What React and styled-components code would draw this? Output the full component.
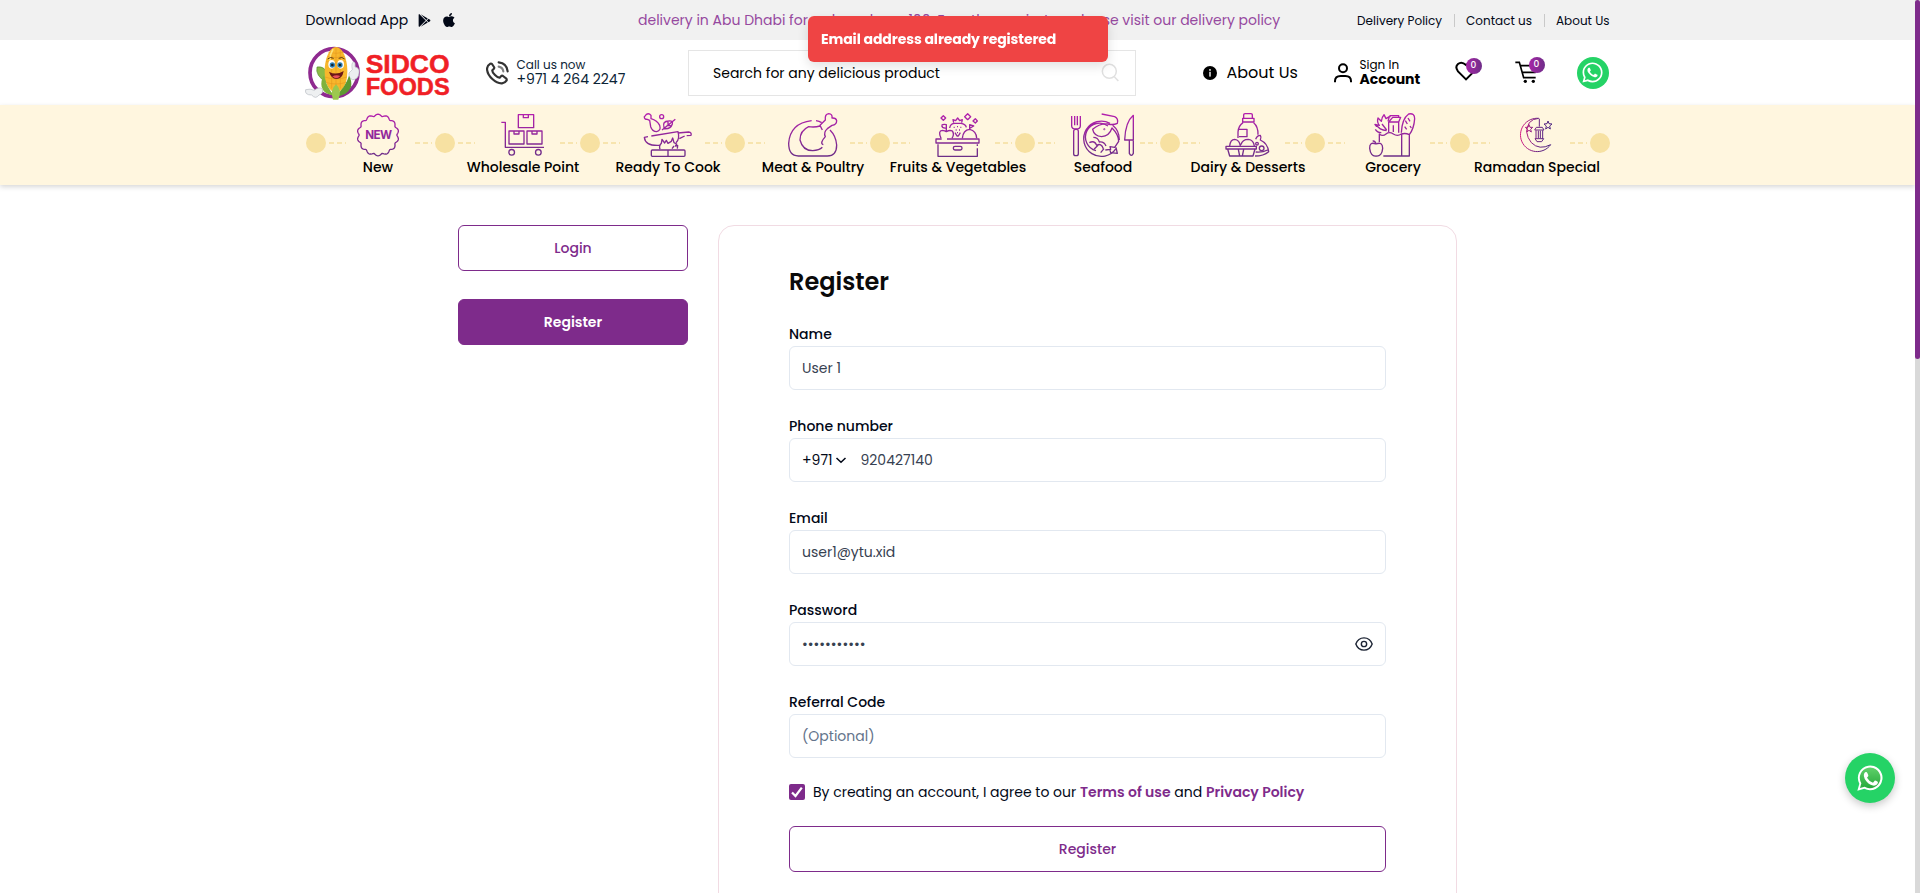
import React from "react";
import styled, { createGlobalStyle } from "styled-components";
import { FaApple, FaGooglePlay, FaWhatsapp } from "react-icons/fa";

const PURPLE = "#7e2b8b";

const GlobalStyle = createGlobalStyle`
  * { box-sizing: border-box; }
  body {
    margin: 0;
    overflow: hidden;
    background: #fff;
    color: #020817;
    font: 400 14px/20px Poppins, Inter, "Liberation Sans", sans-serif;
  }
  input, button { font: inherit; color: inherit; }
`;

/* ---------- page frame ---------- */
const Page = styled.div`
  display: grid;
  grid-template-columns: 1fr 5px;
  height: 893px;
  overflow: hidden;
`;
const Body = styled.div`
  display: flex;
  flex-direction: column;
  min-width: 0;
  overflow: hidden;
`;
const ScrollTrack = styled.div`
  background: #d9d9d9;
`;
const ScrollThumb = styled.div`
  height: 359px;
  background: ${PURPLE};
  border-radius: 3px;
`;
const Container = styled.div`
  display: flex;
  align-items: center;
  width: 1304px;
  height: 100%;
  margin-left: 305.5px;
`;

/* ---------- top bar ---------- */
const TopBar = styled.div`
  height: 40px;
  flex: none;
  background: #f1f1f1;
`;
const Download = styled.div`
  display: flex;
  align-items: center;
  width: 332.5px;
  svg { display: block; }
`;
const PlayIcon = styled(FaGooglePlay)`
  margin-left: 10px;
`;
const AppleIcon = styled(FaApple)`
  margin-left: 10px;
`;
const Ticker = styled.div`
  width: 650px;
  white-space: nowrap;
  overflow: hidden;
  color: #96499f;
`;
const TopLinks = styled.div`
  display: flex;
  margin-left: auto;
  font-size: 12px;
  line-height: 12px;
`;
const TopLink = styled.a`
  padding: 1px 0 0 11px;
  margin-left: 12px;
  border-left: 1px solid ${(p) => (p.$first ? "transparent" : "#c9c9c9")};
  white-space: nowrap;
`;

/* ---------- header ---------- */
const Header = styled.header`
  height: 65px;
  flex: none;
`;
const Logo = styled.div`
  width: 180px;
  height: 56px;
  svg { display: block; margin-left: -0.5px; }
`;
const TwoLine = styled.div`
  display: flex;
  flex-direction: column;
  margin-left: ${(p) => p.$gap}px;
  margin-top: -1px;
  width: ${(p) => p.$width}px;
  white-space: nowrap;
  line-height: 14px;
  color: ${(p) => p.$color || "#000"};
`;
const Small = styled.span`
  font-size: 12px;
`;
const Strong = styled.span`
  font-weight: ${(p) => (p.$bold ? 700 : 400)};
`;
const SearchBox = styled.div`
  display: flex;
  align-items: center;
  justify-content: space-between;
  width: 448px;
  height: 46px;
  padding: 0 16px 0 24.5px;
  border: 1px solid #e5e5e5;
  color: #000;
`;
const AboutLink = styled.a`
  display: flex;
  align-items: center;
  gap: 10px;
  width: 131px;
  margin-left: 67px;
  font-size: 16px;
  color: #000;
  white-space: nowrap;
`;
const CountIcon = styled.div`
  position: relative;
  width: ${(p) => p.$width}px;
  height: 24px;
  svg { display: block; }
`;
const Count = styled.span`
  position: absolute;
  left: ${(p) => p.$left}px;
  top: ${(p) => p.$top}px;
  width: 16px;
  height: 16px;
  border-radius: 50%;
  background: linear-gradient(90deg, #a727a6, #6f2d89);
  color: #fff;
  font-size: 9px;
  line-height: 15px;
  text-align: center;
  font-weight: 500;
`;
const Whatsapp = styled.a`
  display: flex;
  align-items: center;
  justify-content: center;
  width: 32px;
  height: 32px;
  border-radius: 50%;
  background: #25d366;
  color: #fff;
`;

/* ---------- category strip ---------- */
const Strip = styled.nav`
  height: 80px;
  flex: none;
  background: #fff6df;
  box-shadow: 0 2px 5px rgba(0, 0, 0, 0.16);
`;
const StripRow = styled.div`
  display: flex;
  width: 1304px;
  margin-left: 306px;
  padding-top: 8px;
`;
const Cell = styled.div`
  flex: none;
  width: ${(p) => p.$width}px;
`;
const TrackLine = styled.div`
  display: flex;
  align-items: center;
  height: 44px;
`;
const Dot = styled.span`
  flex: none;
  width: 20px;
  height: 20px;
  margin-top: 16px;
  border-radius: 50%;
  background: #f7e1a2;
`;
const Dashes = styled.span`
  flex: none;
  width: 17px;
  height: 2px;
  margin: 16px ${(p) => (p.$after ? 3 : 0)}px 0 ${(p) => (p.$after ? 0 : 3)}px;
  background: repeating-linear-gradient(90deg, #f7e4ae 0 5px, transparent 5px 8px);
`;
const IconBox = styled.svg`
  flex: none;
  display: block;
  width: 64px;
  height: 44px;
  margin: 0 ${(p) => p.$right}px 0 ${(p) => p.$left}px;
  overflow: visible;
`;
const CellLabel = styled.div`
  display: flex;
  justify-content: center;
  width: ${(p) => p.$width}px;
  line-height: 21px;
  font-weight: 500;
  color: #000;
  white-space: nowrap;
`;

/* ---------- account area ---------- */
const Main = styled.main`
  display: flex;
  align-items: flex-start;
  gap: 30px;
  padding: 40px 0 0 458px;
`;
const Tabs = styled.div`
  display: flex;
  flex-direction: column;
  gap: 28px;
  width: 230px;
`;
const Button = styled.button`
  width: 100%;
  height: 46px;
  padding: 0;
  border: 1px solid ${PURPLE};
  border-radius: 6px;
  background: ${(p) => (p.$solid ? PURPLE : "#fff")};
  color: ${(p) => (p.$solid ? "#fff" : PURPLE)};
  font-weight: ${(p) => p.$weight || 500};
`;
const Card = styled.form`
  width: 739px;
  height: 760px;
  padding: 40px 70px 0;
  border: 1px solid #f1dbe3;
  border-radius: 16px;
`;
const Title = styled.h1`
  margin: 0 0 24px;
  font-size: 24px;
  line-height: 32px;
  font-weight: 600;
  color: #0a0a0a;
`;
const Field = styled.div`
  height: 92px;
`;
const Label = styled.label`
  display: block;
  height: 24px;
  line-height: 24px;
  font-weight: 500;
`;
const InputBox = styled.div`
  display: flex;
  align-items: center;
  height: 44px;
  padding: 0 12px;
  border: 1px solid #e2e8f0;
  border-radius: 6px;
`;
const Input = styled.input`
  flex: 1;
  min-width: 0;
  padding: 0;
  border: 0;
  outline: 0;
  background: none;
  color: #374151;
  &::placeholder { color: #64748b; opacity: 1; }
`;
const DialCode = styled.span`
  display: flex;
  align-items: center;
  gap: 2px;
  width: 58.5px;
`;
const Terms = styled.div`
  display: flex;
  align-items: center;
  gap: 8px;
  height: 20px;
  margin: 0 0 24px;
  white-space: nowrap;
`;
const Checkbox = styled.span`
  display: flex;
  width: 16px;
  height: 16px;
  border-radius: 2px;
  background: ${PURPLE};
`;
const TermsLink = styled.a`
  color: ${PURPLE};
  font-weight: 600;
`;

/* ---------- overlays ---------- */
const Toast = styled.div`
  position: fixed;
  left: 808px;
  top: 16px;
  width: 300px;
  height: 46px;
  padding: 0 13px;
  border-radius: 6px;
  background: #ef4444;
  box-shadow: 0 4px 12px rgba(0, 0, 0, 0.12);
  color: #fff;
  font-weight: 700;
  line-height: 46px;
  letter-spacing: -0.1px;
  white-space: nowrap;
`;
const ChatButton = styled.a`
  position: fixed;
  left: 1845px;
  top: 753px;
  display: flex;
  align-items: center;
  justify-content: center;
  width: 50px;
  height: 50px;
  border-radius: 50%;
  background: #25d366;
  box-shadow: 0 3px 9px rgba(0, 0, 0, 0.22);
`;

/* ---------- drawings ---------- */
function LogoArt() {
  return (
    <svg width="150" height="56" viewBox="0 0 450 168" fontFamily="Liberation Sans, Arial, sans-serif" fontWeight="700">
      <circle cx="87" cy="83" r="72" fill="#fff" stroke="#8f2a90" strokeWidth="11" />
      <path d="M64 112Q30 92 36 66Q62 62 68 92Z" fill="#8dbb45" stroke="#4e8a2b" strokeWidth="2" />
      <path d="M142 74q-4-20 4-24q6 2 4 16q14 2 12 18q-2 20-20 20q-12-6-10-20Z" fill="#eceef0" stroke="#b9bec4" strokeWidth="2" />
      <path d="M20 150q-22 0-18-16q14-4 26 2q14-12 24-4q4 14-10 18q-10 14-22 0Z" fill="#eef0f1" stroke="#b5babf" strokeWidth="2" />
      <path d="M93 6C112 6 127 40 127 78C127 120 112 140 93 142C74 140 59 120 59 78C59 40 74 6 93 6Z" fill="#f8b72c" />
      <path d="M80 14V130M93 6V138M106 14V130M68 34Q93 42 118 34M63 50Q93 58 123 50M60 96Q93 108 126 96M70 22Q93 28 116 22M62 112Q93 122 124 112" stroke="#e2921c" strokeWidth="2" fill="none" opacity=".75" />
      <path d="M84 12Q76 26 74 46" stroke="#fde27a" strokeWidth="5" fill="none" />
      <path d="M56 92Q66 128 88 152Q58 150 50 126Q46 108 56 92Z" fill="#7fb23c" />
      <path d="M132 92Q122 126 90 154Q126 154 138 126Q142 108 132 92Z" fill="#5d9a31" />
      <path d="M93 118Q74 134 84 164H100Q112 134 93 118Z" fill="#9cc84e" />
      <ellipse cx="80" cy="58" rx="10" ry="13" fill="#fff" />
      <ellipse cx="107" cy="58" rx="10" ry="13" fill="#fff" />
      <circle cx="82" cy="60" r="8" fill="#2c7fb5" />
      <circle cx="105" cy="60" r="8" fill="#2c7fb5" />
      <circle cx="82" cy="60" r="4" fill="#10202c" />
      <circle cx="105" cy="60" r="4" fill="#10202c" />
      <path d="M68 42q8-8 18-2M101 40q10-6 18 2" stroke="#5c3a12" strokeWidth="3" fill="none" />
      <path d="M72 80Q93 92 116 78Q112 102 94 102Q78 100 72 80Z" fill="#6b1717" />
      <path d="M82 94Q94 88 106 93Q94 106 82 94Z" fill="#e8505b" />
      <g fill="#f01f26" stroke="#f01f26" strokeWidth="1.6">
        <text x="182" y="85" fontSize="80" textLength="252" lengthAdjust="spacingAndGlyphs">SIDCO</text>
        <text x="182" y="151" fontSize="73" textLength="252" lengthAdjust="spacingAndGlyphs">FOODS</text>
      </g>
    </svg>
  );
}

const PhoneIcon = () => (
  <svg width="23" height="24" viewBox="0 0 69 72" fill="none" stroke="#333" strokeWidth="6.500" strokeLinecap="round" strokeLinejoin="round">
    <path d="M13 8Q3 14 3 24Q4 40 19 54Q34 68 48 67Q57 66 62 58Q63 55 60 52L51 45Q48 43 45 46L41 50Q36 51 27 42Q18 33 19 28L23 24Q26 21 24 18L18 9Q16 7 13 8Z" />
    <path d="M38 4Q63 7 65 31" />
    <path d="M38 17Q50 19 52 31" stroke="#808080" />
  </svg>
);
const InfoIcon = () => (
  <svg width="14" height="14" viewBox="0 0 14 14">
    <circle cx="7" cy="7" r="7" fill="#000" />
    <circle cx="7" cy="3.9" r="0.9" fill="#fff" />
    <rect x="6.3" y="5.8" width="1.4" height="4.8" fill="#fff" />
  </svg>
);
const UserIcon = () => (
  <svg width="18" height="20" viewBox="0 0 54 60" fill="none" stroke="#000" strokeWidth="6">
    <circle cx="27" cy="16" r="12" />
    <path d="M3 58V54Q3 39 20 39H34Q51 39 51 54V58" />
  </svg>
);
const HeartIcon = () => (
  <svg width="22" height="20" viewBox="0 0 66 60" fill="none" stroke="#000" strokeWidth="6" strokeLinejoin="miter">
    <path d="M33 55L9 31Q-1 18 9 9Q20 0 33 12Q46 0 57 9Q67 18 57 31Z" />
  </svg>
);
const CartIcon = () => (
  <svg width="24" height="23" viewBox="0 0 72 69" fill="none" stroke="#000" strokeWidth="5">
    <path d="M1 4H13L26 50H62M16 14H66L60 34L23 34" />
    <circle cx="31" cy="61" r="5" fill="#000" stroke="none" />
    <circle cx="55" cy="61" r="5" fill="#000" stroke="none" />
  </svg>
);
const SearchIcon = () => (
  <svg width="18" height="19" viewBox="0 0 54 57" fill="none" stroke="#e0e0e0" strokeWidth="4.5">
    <circle cx="25" cy="25" r="21" />
    <path d="M40 41L52 54" />
  </svg>
);
const EyeIcon = () => (
  <svg width="18" height="14" viewBox="0 0 54 42" fill="none" stroke="#1c2434" strokeWidth="4.2">
    <path d="M2.5 21Q9 2.500 27 2.500Q45 2.500 51.500 21Q45 39.500 27 39.500Q9 39.500 2.500 21Z" />
    <circle cx="27" cy="21" r="8" />
  </svg>
);

/* scalloped outline of the "New" badge */
const burst = (() => {
  const lobes = 14;
  const steps = lobes * 10;
  const points = [];
  for (let i = 0; i < steps; i++) {
    const a = (i / steps) * 2 * Math.PI;
    const r = 58 + 6 * Math.pow(Math.abs(Math.cos((lobes * a) / 2)), 1.4) - 1.5;
    points.push(`${(264 + r * Math.sin(a)).toFixed(1)} ${(105 - r * Math.cos(a)).toFixed(1)}`);
  }
  return `M${points.join("L")}Z`;
})();

const categories = [
  {
    name: "New", x: 168,
    art: (
      <>
        <path d={burst} />
        <text x="226" y="117" fontSize="35" fontFamily="Inter, sans-serif" fontWeight="700" textLength="80" fill="url(#ink)" stroke="none">NEW</text>
      </>
    ),
  },
  {
    name: "Wholesale Point", x: 605,
    art: (
      <>
        <path d="M687 44H733V83H687ZM702 44V53H717V44M659 93H704V132H659ZM674 93V102H689V93M713 93H758V132H713ZM728 93V102H743V93" />
        <path d="M636 67H648V142H764" />
        <circle cx="667" cy="157" r="8.500" /><circle cx="747" cy="157" r="8.500" />
      </>
    ),
  },
  {
    name: "Ready To Cook", x: 1038,
    art: (
      <>
        <path d="M1079 61L1072 58Q1062 58 1063 50Q1067 48 1069 43Q1077 38 1083 46V56Q1102 62 1109 76Q1114 92 1100 95Q1087 94 1082 80Z" />
        <circle cx="1115" cy="50" r="6" />
        <path d="M1122 82Q1116 64 1136 63Q1150 61 1147 72Q1142 88 1122 86ZM1116 90L1156 58M1130 76L1142 77M1134 64V73" />
        <path d="M1084 108L1164 95Q1170 118 1158 128M1074 110L1063 112Q1066 139 1110 136M1164 99L1196 96Q1206 98 1203 106L1190 107M1184 108L1168 116" />
        <path d="M1110 148Q1106 138 1114 130L1116 118L1124 129L1129 121L1134 130L1144 124L1148 114L1152 128L1160 132L1156 138L1163 136L1162 146M1146 146L1152 138" />
        <rect x="1084" y="150" width="101" height="19" rx="3" /><path d="M1134 150V169" />
      </>
    ),
  },
  {
    name: "Meat & Poultry", x: 123,
    art: (
      <>
        <path d="M215 62Q150 70 146 130Q146 168 175 168H262Q290 168 290 135Q288 108 270 90M228 62Q238 63 245 68" />
        <path d="M240 78Q224 83 206 80Q180 92 180 120Q188 152 218 152Q238 151 247 142M250 134Q238 130 256 110Q250 96 262 86L276 76Q290 74 290 62Q288 53 276 54Q278 42 266 41Q254 42 256 60L240 76L247 90" />
      </>
    ),
  },
  {
    name: "Fruits & Vegetables", x: 559,
    art: (
      <>
        <path d="M606 117H589V129H718V117H622M595 133V169H713V145M713 138V133" />
        <rect x="641" y="139" width="26" height="11" rx="5" />
        <path d="M604 115Q594 92 608 91Q616 92 620 95Q630 89 638 93Q645 102 637 115M620 94V82M606 76Q610 72 620 74V84Q608 86 606 76" />
        <path d="M668 115Q670 90 690 88Q710 92 711 115M690 88V74L702 78L692 84" />
        <path d="M630 84Q632 70 646 70H664Q678 72 680 82M642 68L640 59L648 62L654 54L660 62L668 59L666 68M646 98L652 108H656L662 98" />
        <path d="M642 82h3M652 80h3M662 82h3M648 90h3M658 90h3M652 98h3" />
        <path d="M611 47L618 54L611 61L604 54ZM684 41L693 50L684 59L675 50ZM707 56L713 63L707 69L700 63Z" />
      </>
    ),
  },
  {
    name: "Seafood", x: 993,
    art: (
      <>
        <path d="M995 48V78Q995 87 1008 87Q1021 87 1021 78V48M1004 48V76M1012 48V76" />
        <rect x="1001" y="88" width="14" height="79" rx="6" />
        <path d="M1110 70A53 53 0 1 0 1128 146M1104 78A42 42 0 1 0 1068 152" />
        <path d="M1085 42L1124 50Q1136 56 1132 70Q1120 76 1104 72Q1078 70 1058 88Q1062 108 1085 110Q1108 108 1116 84Q1136 104 1136 124L1124 142L1110 140L1112 148L1096 150M1118 76Q1138 92 1138 120M1128 142L1132 160L1112 158L1110 150" />
        <path d="M1048 128Q1064 120 1070 136Q1084 128 1090 146M1060 112Q1074 112 1078 126Q1092 124 1098 138M1062 148L1074 136M1082 158L1092 146" />
        <circle cx="1093" cy="88" r="1" />
        <path d="M1180 46Q1156 66 1154 120H1180ZM1168 122V160Q1174 172 1180 160V122" />
      </>
    ),
  },
  {
    name: "Dairy & Desserts", x: 107,
    art: (
      <>
        <path d="M190 54V44Q190 41 194 41H212Q216 41 216 44V54M187 55H221V66H187ZM188 68Q174 78 173 96V114M220 68Q234 80 233 104M176 88H200V110H176" />
        <path d="M148 138Q150 118 163 118Q178 120 180 138M182 134Q186 118 204 118Q220 120 222 138" />
        <path d="M137 139H228V147H137ZM142 147L148 168H218L224 147M174 148L178 168M190 148L186 168" />
        <path d="M226 118Q230 106 240 106Q244 112 240 120Q262 130 265 155Q250 168 224 168M226 156Q246 158 262 150" />
        <circle cx="244" cy="145" r="7" /><circle cx="230" cy="131" r="4" />
      </>
    ),
  },
  {
    name: "Grocery", x: 543,
    art: (
      <>
        <path d="M598 126V102Q608 110 618 102Q628 94 640 102Q652 110 664 102Q676 98 688 104V168H610M665 104V168" />
        <path d="M588 132Q568 124 569 145Q572 170 588 168Q606 170 608 145Q608 124 588 132ZM588 132Q586 122 578 123" />
        <path d="M664 98Q666 56 686 42Q704 38 704 56Q702 86 688 104M676 62L682 72M684 54L690 64M674 80L680 88M690 78L694 84" />
        <path d="M626 96V66L638 52H662L656 66V98M626 66H656M630 52V47H656V52M640 76V96" />
        <path d="M620 92Q598 90 588 74L598 76Q590 66 594 54L604 64Q606 50 612 44L618 56L628 50L624 64M586 88Q592 98 604 98M606 72L620 90M584 72L590 80" />
      </>
    ),
  },
  {
    name: "Ramadan Special", x: 974, night: true,
    art: (
      <>
        <path d="M1078 55A50 50 0 1 0 1114 134Q1080 152 1056 128Q1032 98 1050 68Q1060 56 1078 55Z" />
        <path d="M1049 74L1052 82L1060 82L1054 88L1056 96L1049 91L1042 96L1044 88L1038 82L1046 82ZM1106 63L1109 71L1118 72L1111 78L1113 87L1106 82L1099 87L1101 78L1094 72L1103 71Z" />
        <path d="M1080 56V80M1066 90L1071 82H1089L1094 90ZM1070 91V116M1090 91V116M1077 92V114M1083 92V114M1067 116H1093L1087 125H1073Z" />
      </>
    ),
  },
];

function CategoryCell({ item, index }) {
  const first = index === 0;
  const last = index === categories.length - 1;
  const [left, right, label] = first ? [0, 5, 144] : last ? [14, 2, 134] : [16, 5, 136];
  return (
    <Cell $width={first ? 149 : last ? 140 : 145}>
      <TrackLine>
        {first && <Dot />}
        <Dashes />
        <IconBox
          viewBox={`${item.x} 39 192 132`}
          $left={left}
          $right={right}
          fill="none"
          stroke={item.night ? "url(#night)" : "url(#ink)"}
          strokeWidth={item.night ? 3 : 4}
          strokeLinejoin="round"
        >
          {item.art}
        </IconBox>
        <Dashes $after />
        <Dot />
      </TrackLine>
      <CellLabel $width={label}>{item.name}</CellLabel>
    </Cell>
  );
}

const GradientDefs = styled.svg`
  position: absolute;
  width: 0;
  height: 0;
`;
const Gradients = () => (
  <GradientDefs>
    <defs>
      <linearGradient id="ink" gradientUnits="userSpaceOnUse" x1="0" x2="0" y1="39" y2="171">
        <stop offset="0" stopColor="#b51fae" />
        <stop offset="1" stopColor="#6c2f87" />
      </linearGradient>
      <linearGradient id="night" gradientUnits="userSpaceOnUse" x1="1022" x2="1110" y1="0" y2="0">
        <stop offset="0" stopColor="#d81b84" />
        <stop offset="0.6" stopColor="#6a2382" />
        <stop offset="1" stopColor="#4d2581" />
      </linearGradient>
    </defs>
  </GradientDefs>
);

export default function App() {
  return (
    <>
      <GlobalStyle />
      <Gradients />
      <Page>
        <Body>
          <TopBar>
            <Container>
              <Download>
                Download App
                <PlayIcon size={13} />
                <AppleIcon size={16} />
              </Download>
              <Ticker>delivery in Abu Dhabi for orders above 100. For other emirates, please visit our delivery policy</Ticker>
              <TopLinks>
                <TopLink $first>Delivery Policy</TopLink>
                <TopLink>Contact us</TopLink>
                <TopLink>About Us</TopLink>
              </TopLinks>
            </Container>
          </TopBar>

          <Header>
            <Container>
              <Logo><LogoArt /></Logo>
              <PhoneIcon />
              <TwoLine $gap={8} $width={171} $color="#0c2436">
                <Small>Call us now</Small>
                <Strong>+971 4 264 2247</Strong>
              </TwoLine>
              <SearchBox>
                Search for any delicious product
                <SearchIcon />
              </SearchBox>
              <AboutLink><InfoIcon />About Us</AboutLink>
              <UserIcon />
              <TwoLine $gap={8} $width={95}>
                <Small>Sign In</Small>
                <Strong $bold>Account</Strong>
              </TwoLine>
              <CountIcon $width={60}>
                <HeartIcon />
                <Count $left={11} $top={-3}>0</Count>
              </CountIcon>
              <CountIcon $width={62}>
                <CartIcon />
                <Count $left={14} $top={-4}>0</Count>
              </CountIcon>
              <Whatsapp><FaWhatsapp size={23} /></Whatsapp>
            </Container>
          </Header>

          <Strip>
            <StripRow>
              {categories.map((item, i) => <CategoryCell key={item.name} item={item} index={i} />)}
            </StripRow>
          </Strip>

          <Main>
            <Tabs>
              <Button>Login</Button>
              <Button $solid $weight={600}>Register</Button>
            </Tabs>
            <Card>
              <Title>Register</Title>
              <Field>
                <Label>Name</Label>
                <InputBox><Input defaultValue="User 1" /></InputBox>
              </Field>
              <Field>
                <Label>Phone number</Label>
                <InputBox>
                  <DialCode>
                    +971
                    <svg width="12" height="12" viewBox="0 0 12 12" fill="none" stroke="#020817" strokeWidth="1.5">
                      <path d="M1.500 4L6 8.300L10.500 4" />
                    </svg>
                  </DialCode>
                  <Input defaultValue="920427140" />
                </InputBox>
              </Field>
              <Field>
                <Label>Email</Label>
                <InputBox><Input defaultValue="user1@ytu.xid" /></InputBox>
              </Field>
              <Field>
                <Label>Password</Label>
                <InputBox>
                  <Input type="password" defaultValue="abcdefghijk" />
                  <EyeIcon />
                </InputBox>
              </Field>
              <Field>
                <Label>Referral Code</Label>
                <InputBox><Input placeholder="(Optional)" /></InputBox>
              </Field>
              <Terms>
                <Checkbox>
                  <svg width="16" height="16" viewBox="0 0 16 16" fill="none" stroke="#fff" strokeWidth="2.200">
                    <path d="M3 8.400L6.500 12L12.800 3.600" />
                  </svg>
                </Checkbox>
                <span>
                  By creating an account, I agree to our <TermsLink>Terms of use</TermsLink> and <TermsLink>Privacy Policy</TermsLink>
                </span>
              </Terms>
              <Button type="button">Register</Button>
            </Card>
          </Main>
        </Body>
        <ScrollTrack><ScrollThumb /></ScrollTrack>
      </Page>
      <Toast>Email address already registered</Toast>
      <ChatButton>
        <svg width="26" height="26" viewBox="0 0 78 78">
          <defs>
            <linearGradient id="chat" x1="0" x2="0" y1="0" y2="1">
              <stop offset="0" stopColor="#5fd06a" />
              <stop offset="1" stopColor="#27a93c" />
            </linearGradient>
          </defs>
          <path d="M1 77L7 56A37 37 0 1 1 22 71Z" fill="#fff" />
          <path d="M9 69L13 55A31 31 0 1 1 23 65Z" fill="url(#chat)" />
          <path d="M24 22Q29 19 31 24L34 31Q35 33 30 38Q36 49 48 53L53 47Q55 46 63 51Q62 61 51 62Q39 62 28 49Q15 32 24 22Z" fill="#fff" />
        </svg>
      </ChatButton>
    </>
  );
}
